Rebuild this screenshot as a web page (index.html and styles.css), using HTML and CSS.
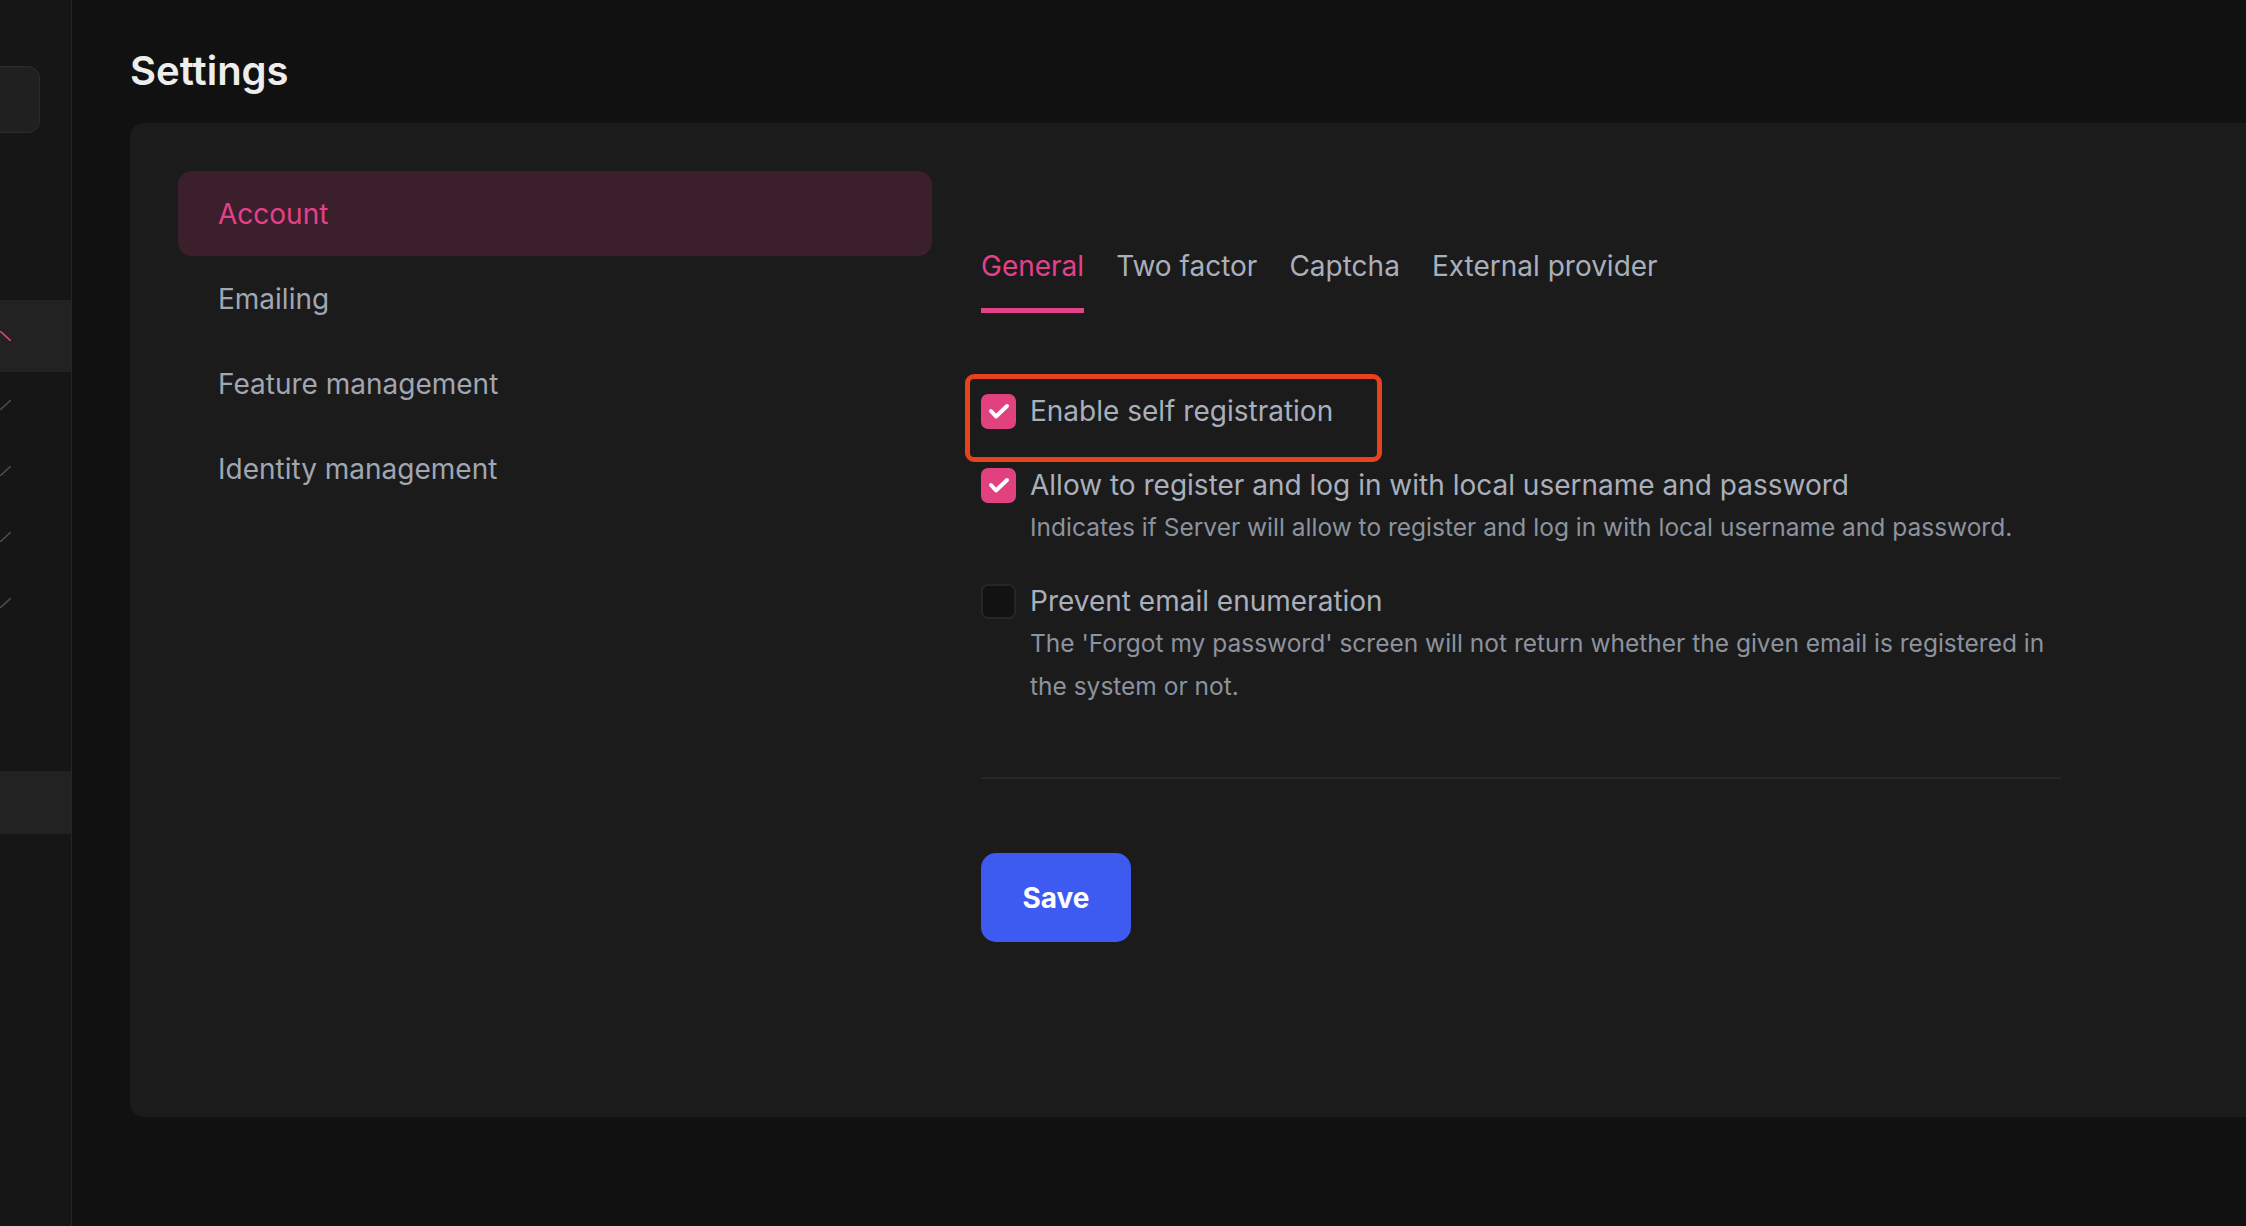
FILE: index.html
```html
<!DOCTYPE html>
<html lang="en">
<head>
    <meta charset="UTF-8">
    <title>Settings</title>
    <link rel="stylesheet" href="styles.css">
</head>
<body>

<!-- side menu (scrolled off to the left) -->
<aside class="side">
    <div class="side-search"></div>
    <div class="side-item side-item-open">
        <svg class="chev" viewBox="0 0 11 10"><path d="M0 0 L11 10" stroke="#e5408a" stroke-width="1.6" fill="none"/></svg>
    </div>
    <div class="side-item">
        <svg class="chev" viewBox="0 0 11 10"><path d="M0 10 L11 0" stroke="#4d4d4d" stroke-width="1.6" fill="none"/></svg>
    </div>
    <div class="side-item">
        <svg class="chev" viewBox="0 0 11 10"><path d="M0 10 L11 0" stroke="#4d4d4d" stroke-width="1.6" fill="none"/></svg>
    </div>
    <div class="side-item">
        <svg class="chev" viewBox="0 0 11 10"><path d="M0 10 L11 0" stroke="#4d4d4d" stroke-width="1.6" fill="none"/></svg>
    </div>
    <div class="side-item">
        <svg class="chev" viewBox="0 0 11 10"><path d="M0 10 L11 0" stroke="#4d4d4d" stroke-width="1.6" fill="none"/></svg>
    </div>
    <div class="side-item side-item-low"></div>
</aside>

<main class="main">
    <h1 class="page-title">Settings</h1>

    <div class="card">
        <nav class="group-list">
            <div class="group-item active">Account</div>
            <div class="group-item">Emailing</div>
            <div class="group-item">Feature management</div>
            <div class="group-item">Identity management</div>
        </nav>

        <section class="group-body">
            <div class="tabs">
                <div class="tab active">General</div>
                <div class="tab">Two factor</div>
                <div class="tab">Captcha</div>
                <div class="tab">External provider</div>
            </div>

            <div class="options">
                <div class="option">
                    <div class="mark-box"></div>
                    <span class="check on">
                        <svg viewBox="0 0 35 35"><path d="M10 17 L15 22.5 L26 12" stroke="#fff" stroke-width="4" fill="none" stroke-linecap="round" stroke-linejoin="round"/></svg>
                    </span>
                    <div class="option-text">
                        <div class="option-label">Enable self registration</div>
                    </div>
                </div>

                <div class="option">
                    <span class="check on">
                        <svg viewBox="0 0 35 35"><path d="M10 17 L15 22.5 L26 12" stroke="#fff" stroke-width="4" fill="none" stroke-linecap="round" stroke-linejoin="round"/></svg>
                    </span>
                    <div class="option-text">
                        <div class="option-label">Allow to register and log in with local username and password</div>
                        <div class="option-hint">Indicates if Server will allow to register and log in with local username and password.</div>
                    </div>
                </div>

                <div class="option">
                    <span class="check"></span>
                    <div class="option-text">
                        <div class="option-label">Prevent email enumeration</div>
                        <div class="option-hint">The 'Forgot my password' screen will not return whether the given email is registered in the system or not.</div>
                    </div>
                </div>
            </div>

            <hr class="divider">

            <button class="btn-save">Save</button>
        </section>
    </div>
</main>

</body>
</html>
```

FILE: styles.css
```css
body {
    margin: 0;
    background-color: #111111;
    font-family: Inter, "Noto Sans", sans-serif;
    display: flex;
    height: 100vh;
    overflow: hidden;
}

/* side menu */
.side {
    width: 72px;
    flex-shrink: 0;
    background-color: #161616;
    border-right: 1px solid #262626;
    padding-top: 66px;
    box-sizing: border-box;
    overflow: hidden;
}

.side-search {
    width: 60px;
    height: 67px;
    margin-left: -20px;
    background-color: #202020;
    border: 1px solid #2c2c2c;
    border-radius: 12px;
    box-sizing: border-box;
    margin-bottom: 167px;
}

.side-item {
    height: 66px;
    display: flex;
    align-items: center;
}

.side-item-open {
    height: 72px;
    background-color: #222222;
}

.side-item-low {
    height: 63px;
    margin-top: 135px;
    background-color: #222222;
}

.chev {
    width: 11px;
    height: 10px;
    display: block;
}

/* main */
.main {
    flex: 1;
    padding-left: 58px;
    overflow: hidden;
}

.page-title {
    margin: 47px 0 0 0;
    font-size: 40px;
    line-height: 48px;
    font-weight: 600;
    color: #ededed;
}

.card {
    margin-top: 28px;
    margin-right: -80px;
    height: 994px;
    box-sizing: border-box;
    background-color: #1b1b1b;
    border-radius: 14px;
    padding: 48px;
    display: flex;
    gap: 49px;
}

.group-list {
    width: 754px;
    flex-shrink: 0;
}

.group-item {
    height: 85px;
    line-height: 87px;
    padding-left: 40px;
    font-size: 28px;
    color: #a0a6b2;
    border-radius: 14px;
}

.group-item.active {
    background-color: #3b1f2b;
    color: #e5408a;
}

.group-body {
    width: 1080px;
    flex-shrink: 0;
}

.tabs {
    display: flex;
    gap: 32px;
    margin-top: 78px;
}

.tab {
    font-size: 28px;
    line-height: 34px;
    color: #a9afbb;
    padding-bottom: 25px;
    border-bottom: 5px solid transparent;
}

.tab.active {
    color: #e5408a;
    border-bottom-color: #e5408a;
}

.options {
    margin-top: 81px;
}

.option {
    display: flex;
    gap: 14px;
    position: relative;
    margin-bottom: 35px;
}

.option:first-child {
    margin-bottom: 39px;
}

.check {
    width: 35px;
    height: 35px;
    flex-shrink: 0;
    border-radius: 7px;
    background-color: #121212;
    border: 2px solid #262626;
    box-sizing: border-box;
}

.check.on {
    background-color: #e2417f;
    border: none;
}

.check svg {
    width: 35px;
    height: 35px;
    display: block;
}

.option-label {
    font-size: 28px;
    line-height: 35px;
    color: #a9afbb;
}

.option-hint {
    margin-top: 3px;
    font-size: 24.5px;
    line-height: 43px;
    color: #8c929e;
}

/* highlight drawn over the first option */
.mark-box {
    position: absolute;
    left: -16px;
    top: -20px;
    width: 417px;
    height: 88px;
    border: 5px solid #e8411e;
    border-radius: 9px;
    box-sizing: border-box;
}

.divider {
    margin: 69px 0 0 0;
    border: none;
    height: 2px;
    background-color: #262626;
}

.btn-save {
    margin-top: 74px;
    width: 150px;
    height: 89px;
    border: none;
    border-radius: 15px;
    background-color: #3d5af1;
    color: #ffffff;
    font-family: Inter, "Noto Sans", sans-serif;
    font-size: 28px;
    font-weight: 700;
    cursor: pointer;
}
```
